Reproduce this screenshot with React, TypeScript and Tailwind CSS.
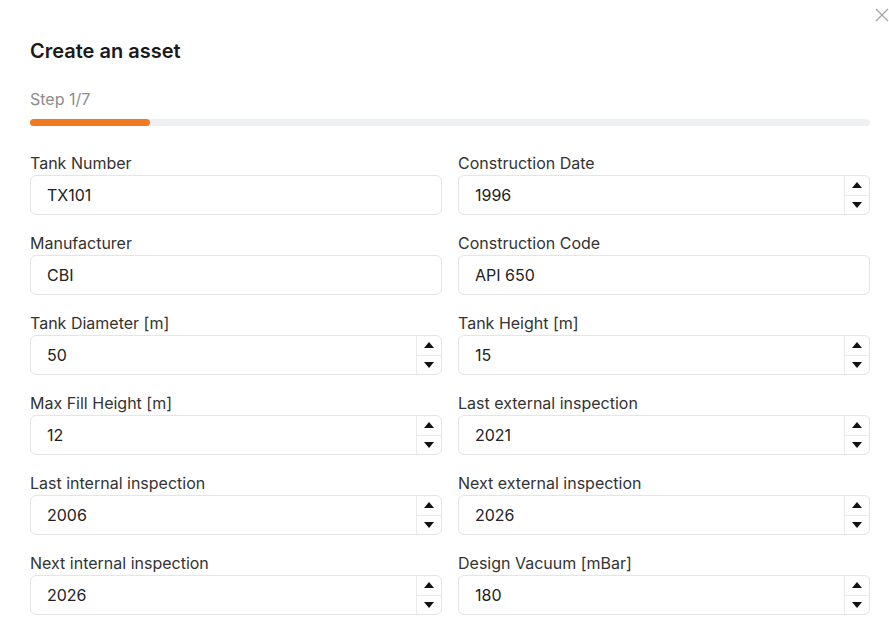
const fields: { label: string; value: string; spin: boolean }[] = [
  { label: "Tank Number", value: "TX101", spin: false },
  { label: "Construction Date", value: "1996", spin: true },
  { label: "Manufacturer", value: "CBI", spin: false },
  { label: "Construction Code", value: "API 650", spin: false },
  { label: "Tank Diameter [m]", value: "50", spin: true },
  { label: "Tank Height [m]", value: "15", spin: true },
  { label: "Max Fill Height [m]", value: "12", spin: true },
  { label: "Last external inspection", value: "2021", spin: true },
  { label: "Last internal inspection", value: "2006", spin: true },
  { label: "Next external inspection", value: "2026", spin: true },
  { label: "Next internal inspection", value: "2026", spin: true },
  { label: "Design Vacuum [mBar]", value: "180", spin: true },
];

const Spinner = () => (
  <div className="flex w-[25px] flex-col border-l border-[#e8eaed]">
    <div className="flex flex-1 items-center justify-center border-b border-[#e8eaed]">
      <svg width="10" height="6" viewBox="0 0 10 6">
        <path d="M5 0 L10 6 L0 6 Z" fill="#111" />
      </svg>
    </div>
    <div className="flex flex-1 items-center justify-center">
      <svg width="10" height="6" viewBox="0 0 10 6">
        <path d="M0 0 L10 0 L5 6 Z" fill="#111" />
      </svg>
    </div>
  </div>
);

export default function App() {
  return (
    <div
      className="relative min-h-[640px] w-[889px] bg-white pl-[30px] pr-[19px] pt-[37px]"
      style={{ fontFamily: "Inter, 'Noto Sans', sans-serif" }}
    >
      <button className="absolute right-0 top-[8px] text-[#a3a3a3]">
        <svg width="14" height="14" viewBox="0 0 14 14">
          <path d="M1 1 L13 13 M13 1 L1 13" stroke="currentColor" strokeWidth="1.2" />
        </svg>
      </button>

      <h2 className="text-[20px] font-semibold leading-[28px] text-[#1a1a1a]">
        Create an asset
      </h2>

      <div className="mt-[23px] text-[16px] leading-[22px] text-[#8c8c8c]">Step 1/7</div>
      <div className="mt-[9px] h-[7px] w-full rounded-full bg-[#eef0f3]">
        <div className="h-full w-[120px] rounded-full bg-[#f07a22]" />
      </div>

      <div className="mt-[26px] grid grid-cols-2 gap-x-[16px] gap-y-[17px]">
        {fields.map((f) => (
          <div key={f.label} className="flex flex-col">
            <label className="text-[16px] leading-[22px] text-[#333]">{f.label}</label>
            <div className="mt-[1px] flex h-[40px] overflow-hidden rounded-[6px] border border-[#e3e5e8] bg-white">
              <div className="flex flex-1 items-center pl-[16px] text-[16px] text-[#222]">
                {f.value}
              </div>
              {f.spin && <Spinner />}
            </div>
          </div>
        ))}
      </div>
    </div>
  );
}
